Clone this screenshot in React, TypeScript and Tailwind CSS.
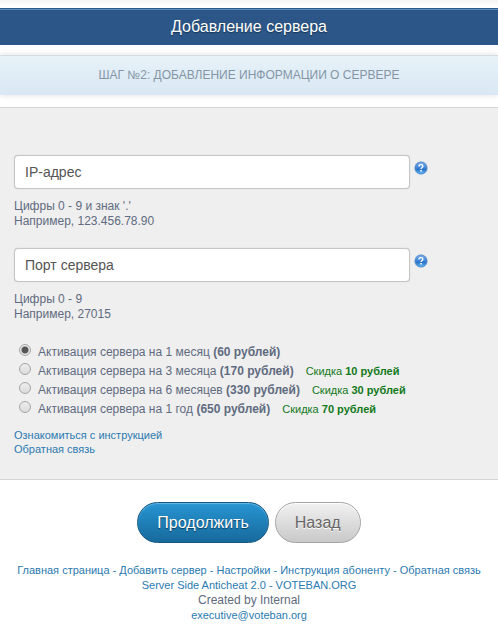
import React, { useState } from 'react';

interface FieldProps {
  id: string;
  label: string;
  hints: string[];
}

interface Plan {
  id: string;
  period: string;
  price: string;
  discount?: string;
}

const plans: Plan[] = [
  { id: 'month-1', period: '1 месяц', price: '60 рублей' },
  { id: 'month-3', period: '3 месяца', price: '170 рублей', discount: '10 рублей' },
  { id: 'month-6', period: '6 месяцев', price: '330 рублей', discount: '30 рублей' },
  { id: 'year-1', period: '1 год', price: '650 рублей', discount: '70 рублей' },
];

const footerLinks = ['Главная страница', 'Добавить сервер', 'Настройки', 'Инструкция абоненту', 'Обратная связь'];

const HelpIcon: React.FC = () => (
  <svg viewBox="0 0 14 14" className="block h-3.5 w-3.5" aria-hidden="true">
    <defs>
      <linearGradient id="help-fill" x1="0" y1="0" x2="0" y2="1">
        <stop offset="0" stopColor="#7fb0e8" />
        <stop offset="0.5" stopColor="#3d84d6" />
        <stop offset="0.6" stopColor="#2a70c6" />
        <stop offset="1" stopColor="#62c0f8" />
      </linearGradient>
    </defs>
    <circle cx="7" cy="7" r="6.8" fill="#a9c3e2" />
    <circle cx="7" cy="7" r="5.9" fill="url(#help-fill)" stroke="#3c78c0" strokeWidth="0.6" />
    <path d="M5 5.5C5 4.2 5.8 3.7 7 3.7s1.9.6 1.9 1.6c0 1.2-1.8 1.4-1.8 2.7" fill="none" stroke="#fff" strokeWidth="1.3" />
    <rect x="6.3" y="9" width="1.6" height="1.5" fill="#fff" />
  </svg>
);

const Field: React.FC<FieldProps> = ({ id, label, hints }) => (
  <div>
    <div className="flex items-start gap-1">
      <input
        id={id}
        type="text"
        placeholder={label}
        aria-label={label}
        aria-describedby={`${id}-hint`}
        className="h-[34px] min-w-0 max-w-[396px] flex-1 rounded border border-[#c6c6c6] bg-white px-2.5 text-[14px] text-[#555] shadow-[0_0_1px_#bbb] outline-none placeholder:text-[#555]"
      />
      <button type="button" aria-label={`Подсказка: ${label}`} className="mt-1.5">
        <HelpIcon />
      </button>
    </div>
    <p id={`${id}-hint`} className="mt-2.5 text-[12px] leading-[15px]">
      {hints.map((hint) => (
        <span key={hint} className="block">{hint}</span>
      ))}
    </p>
  </div>
);

export default function App() {
  const [selected, setSelected] = useState('month-1');

  return (
    <div className="bg-white font-['Liberation_Sans',Arial,sans-serif] text-[#5f6b80]">
      <header className="bg-linear-to-b from-[#f3f3f3] to-white to-[6px] pt-2">
        <h1 className="border-t border-[#2b5a8c] bg-[#2c5687] py-1.5 text-center text-[16px] leading-6 text-white shadow-[inset_0_1px_0_#5c8dbb] [text-shadow:0_1px_1px_#163554]">
          Добавление сервера
        </h1>
      </header>

      <h2 className="mt-2.5 border-t border-[#d5dde3] bg-linear-to-b from-[#e7f1f8] to-[#d9e8f4] py-2.5 text-center text-[12px] leading-[19px] text-[#8496a6] shadow-[0_0_6px_#dcdcdc]">
        ШАГ №2: ДОБАВЛЕНИЕ ИНФОРМАЦИИ О СЕРВЕРЕ
      </h2>

      <form onSubmit={(e) => e.preventDefault()}>
        <div className="mt-3 border-y border-[#d6d6d6] bg-[#efefef] px-3.5 pt-[47px] pb-[23px]">
          <div className="flex flex-col gap-[19px]">
            <Field id="ip" label="IP-адрес" hints={["Цифры 0 - 9 и знак '.'", 'Например, 123.456.78.90']} />
            <Field id="port" label="Порт сервера" hints={['Цифры 0 - 9', 'Например, 27015']} />
          </div>

          <div role="radiogroup" aria-label="Период активации" className="mt-[22px]">
            {plans.map((plan) => (
              <div key={plan.id} className="flex h-[19px] items-start pl-[5px]">
                <input
                  id={plan.id}
                  type="radio"
                  name="plan"
                  checked={selected === plan.id}
                  onChange={() => setSelected(plan.id)}
                  className="h-3 w-3 shrink-0 appearance-none rounded-full border border-[#a5a5a5] bg-linear-to-b from-[#ededed] to-[#dcdcdc] checked:bg-[radial-gradient(circle,#555_0_3px,#e6e6e6_4px)]"
                />
                <label htmlFor={plan.id} className="ml-[7px] whitespace-nowrap pt-px text-[12px] leading-[15px]">
                  Активация сервера на {plan.period} <b>({plan.price})</b>
                  {plan.discount && (
                    <span className="ml-3 text-[11px] text-[#12791a]">
                      Скидка <b>{plan.discount}</b>
                    </span>
                  )}
                </label>
              </div>
            ))}
          </div>

          <nav className="mt-2 flex flex-col items-start text-[11px] leading-[14px] text-[#2a7ab0]">
            <a href="#instruction">Ознакомиться с инструкцией</a>
            <a href="#feedback">Обратная связь</a>
          </nav>
        </div>

        <div className="mt-[22px] flex justify-center gap-1.5">
          <button
            type="submit"
            className="h-[41px] rounded-full border border-[#14567f] bg-linear-to-b from-[#2795d3] to-[#176a9c] px-[19px] text-[16px] text-white shadow-[inset_0_1px_1px_#69b8e4] [text-shadow:0_1px_1px_#0b3b5a]"
          >
            Продолжить
          </button>
          <button
            type="button"
            className="h-[41px] rounded-full border border-[#a3a3a3] bg-linear-to-b from-[#f1f1f1] to-[#c9c9c9] px-[19px] text-[16px] text-[#666] shadow-[inset_0_1px_1px_#fff] [text-shadow:0_1px_0_#fff]"
          >
            Назад
          </button>
        </div>
      </form>

      <footer className="mt-5 pb-4 text-center text-[11px] leading-[15px] text-[#2a7ab0]">
        <nav>
          {footerLinks.map((link, index) => (
            <React.Fragment key={link}>
              {index > 0 && ' - '}
              <a href="#">{link}</a>
            </React.Fragment>
          ))}
        </nav>
        <p>
          <a href="#">Server Side Anticheat 2.0</a> - <a href="#">VOTEBAN.ORG</a>
        </p>
        <p className="text-[12px] text-[#5f6b80]">Created by Internal</p>
        <a href="mailto:executive@voteban.org" className="block">executive@voteban.org</a>
      </footer>
    </div>
  );
}
